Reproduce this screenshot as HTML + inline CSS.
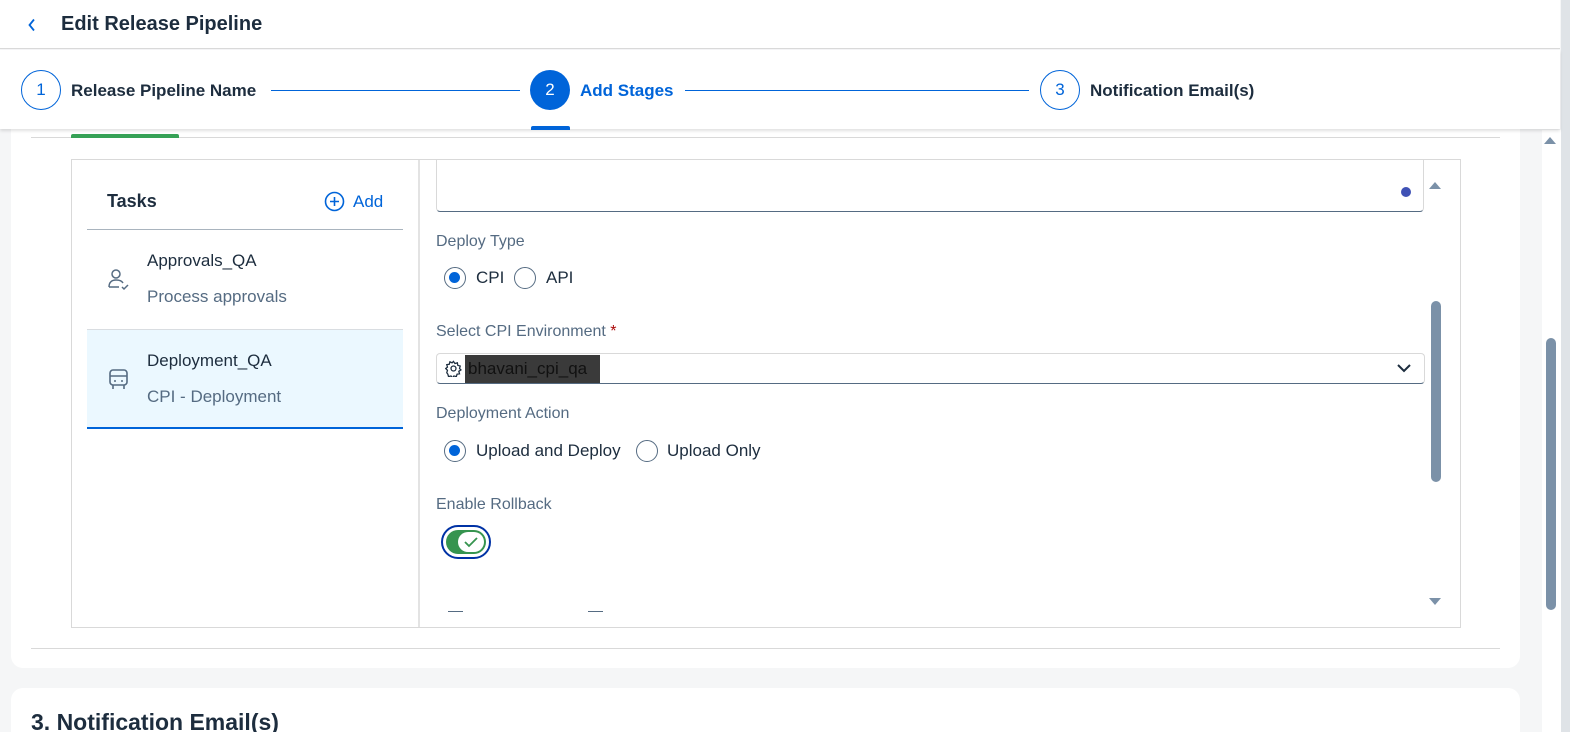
<!DOCTYPE html>
<html><head><style>
*{box-sizing:border-box;margin:0;padding:0}
html,body{width:1570px;height:732px;overflow:hidden}
body{background:#f5f6f7;font-family:"Liberation Sans",sans-serif;color:#1d2d3e;position:relative}
.abs{position:absolute}
.lbl{color:#556b82;font-size:16px}
.radio{position:absolute;width:22px;height:22px;border:1.5px solid #556b82;border-radius:50%;display:block;background:#fff}
.radio.on::after{content:"";position:absolute;left:4px;top:4px;width:11px;height:11px;border-radius:50%;background:#0064d9}
</style></head><body>
<!-- header -->
<div class="abs" style="left:0;top:0;width:1560px;height:49px;background:#fff;border-bottom:1px solid #d9d9d9"></div>
<svg class="abs" style="left:27px;top:18px" width="10" height="14"><path d="M7 1.5 L2.5 7 L7 12.5" stroke="#0064d9" stroke-width="1.8" fill="none"/></svg>
<div class="abs" style="left:61px;top:13px;font-size:20px;font-weight:bold">Edit Release Pipeline</div>
<!-- stepper -->
<div class="abs" style="left:0;top:50px;width:1560px;height:79px;background:#fff;box-shadow:0 2px 3px rgba(0,0,0,.12);z-index:2">
 <div class="abs" style="left:21px;top:20px;width:40px;height:40px;border:1.5px solid #0064d9;border-radius:50%;color:#0064d9;font-size:17px;text-align:center;line-height:37px">1</div>
 <div class="abs" style="left:71px;top:31px;font-size:17px;font-weight:bold">Release Pipeline Name</div>
 <div class="abs" style="left:271px;top:40px;width:249px;height:1px;background:#0064d9"></div>
 <div class="abs" style="left:530px;top:20px;width:40px;height:40px;background:#0064d9;border-radius:50%;color:#fff;font-size:17px;text-align:center;line-height:40px">2</div>
 <div class="abs" style="left:580px;top:31px;font-size:17px;font-weight:bold;color:#0064d9">Add Stages</div>
 <div class="abs" style="left:685px;top:40px;width:344px;height:1px;background:#0064d9"></div>
 <div class="abs" style="left:1040px;top:20px;width:40px;height:40px;border:1.5px solid #0064d9;border-radius:50%;color:#0064d9;font-size:17px;text-align:center;line-height:37px">3</div>
 <div class="abs" style="left:1090px;top:31px;font-size:17px;font-weight:bold">Notification Email(s)</div>
 <div class="abs" style="left:531px;top:76px;width:39px;height:4px;background:#0064d9;border-radius:2px 2px 0 0"></div>
</div>
<!-- card -->
<div class="abs" style="left:11px;top:110px;width:1509px;height:558px;background:#fff;border-radius:12px"></div>
<div class="abs" style="left:31px;top:137px;width:1469px;height:1px;background:#d9d9d9"></div>
<div class="abs" style="left:71px;top:134px;width:108px;height:4px;background:#36a156;border-radius:2px 2px 0 0"></div>
<div class="abs" style="left:71px;top:159px;width:1390px;height:469px;border:1px solid #d9d9d9;background:#fff"></div>
<div class="abs" style="left:418px;top:160px;width:2px;height:467px;background:#e3e3e3"></div>
<!-- left -->
<div class="abs" style="left:107px;top:191px;font-size:18px;font-weight:bold">Tasks</div>
<svg class="abs" style="left:324px;top:191px" width="21" height="21"><circle cx="10.5" cy="10.5" r="9" stroke="#0064d9" stroke-width="1.6" fill="none"/><path d="M10.5 6v9M6 10.5h9" stroke="#0064d9" stroke-width="1.6"/></svg>
<div class="abs" style="left:353px;top:192px;font-size:17px;color:#0064d9">Add</div>
<div class="abs" style="left:87px;top:229px;width:316px;height:1px;background:#a9b4be"></div>
<svg class="abs" style="left:107px;top:268px" width="24" height="24"><circle cx="9" cy="6" r="4" stroke="#556b82" stroke-width="1.5" fill="none"/><path d="M2 19c0-5 3-7 7-7s6 1 7 3M2 19h10M15 19l2 2 4-4" stroke="#556b82" stroke-width="1.5" fill="none"/></svg>
<div class="abs" style="left:147px;top:251px;font-size:17px">Approvals_QA</div>
<div class="abs" style="left:147px;top:287px;font-size:17px;color:#556b82">Process approvals</div>
<div class="abs" style="left:87px;top:329px;width:316px;height:100px;background:#ebf8ff;border-top:1px solid #d9dde1;border-bottom:2px solid #0064d9"></div>
<svg class="abs" style="left:107px;top:368px" width="24" height="24"><rect x="3" y="2" width="17" height="15" rx="3" stroke="#556b82" stroke-width="1.6" fill="none"/><path d="M3 8h17M6 17v4M17 17v4" stroke="#556b82" stroke-width="1.6"/><circle cx="8" cy="13" r="1" fill="#556b82"/><circle cx="15" cy="13" r="1" fill="#556b82"/></svg>
<div class="abs" style="left:147px;top:351px;font-size:17px">Deployment_QA</div>
<div class="abs" style="left:147px;top:387px;font-size:17px;color:#556b82">CPI - Deployment</div>
<!-- right -->
<div class="abs" style="left:436px;top:160px;width:988px;height:52px;border:1px solid #d9d9d9;border-top:none;border-bottom:1.5px solid #556b82;border-radius:0 0 4px 4px"></div>
<div class="abs" style="left:1401px;top:187px;width:10px;height:10px;border-radius:50%;background:#3f51b5"></div>
<div class="abs lbl" style="left:436px;top:233px">Deploy Type</div>
<span class="radio on" style="left:444px;top:267px"></span>
<div class="abs" style="left:476px;top:268px;font-size:17px">CPI</div>
<span class="radio" style="left:514px;top:267px"></span>
<div class="abs" style="left:546px;top:268px;font-size:17px">API</div>
<div class="abs lbl" style="left:436px;top:323px">Select CPI Environment<span style="color:#aa0808"> *</span></div>
<div class="abs" style="left:436px;top:353px;width:989px;height:31px;border:1px solid #d9d9d9;border-bottom:1.5px solid #556b82;border-radius:4px"></div>
<svg class="abs" style="left:445px;top:360px" width="17" height="17" viewBox="0 0 24 24"><path d="M12 2l2 3 3.5-1 .5 3.5 3.5 1-1 3.5 2 2-3 2 1 3.5-3.5.5-1 3.5-3.5-1-2 3-2-3-3.5 1-1-3.5L2.5 18l1-3.5L1 12l2.5-2-1-3.5L6 6l1-3.5L10 4z" stroke="#1d2d3e" stroke-width="1.8" fill="none"/><circle cx="12" cy="12" r="3.5" stroke="#1d2d3e" stroke-width="1.8" fill="none"/></svg>
<div class="abs" style="left:465px;top:355px;width:135px;height:28px;background:#3a3a3a"></div>
<div class="abs" style="left:468px;top:359px;font-size:17px;color:#111">bhavani_cpi_qa</div>
<svg class="abs" style="left:1397px;top:363px" width="14" height="10"><path d="M1 2l6 6 6-6" stroke="#1d2d3e" stroke-width="2" fill="none"/></svg>
<div class="abs lbl" style="left:436px;top:405px">Deployment Action</div>
<span class="radio on" style="left:444px;top:440px"></span>
<div class="abs" style="left:476px;top:441px;font-size:17px">Upload and Deploy</div>
<span class="radio" style="left:636px;top:440px"></span>
<div class="abs" style="left:667px;top:441px;font-size:17px">Upload Only</div>
<div class="abs lbl" style="left:436px;top:496px">Enable Rollback</div>
<div class="abs" style="left:441px;top:525px;width:50px;height:34px;border:2px solid #0032a5;border-radius:17px;background:#fff"></div>
<div class="abs" style="left:446px;top:530px;width:40px;height:24px;border-radius:12px;background:#36944f"></div>
<div class="abs" style="left:458px;top:532px;width:26px;height:20px;border-radius:10px;background:#fff"></div>
<svg class="abs" style="left:463px;top:535px" width="16" height="14"><path d="M2 7l4 4 8-8" stroke="#36944f" stroke-width="1.8" fill="none"/></svg>
<div class="abs" style="left:448px;top:611px;width:15px;height:1px;background:#556b82"></div>
<div class="abs" style="left:588px;top:611px;width:15px;height:1px;background:#556b82"></div>
<!-- inner scrollbar -->
<svg class="abs" style="left:1428px;top:180px" width="14" height="10"><path d="M1 9L7 2l6 7z" fill="#7b91a8"/></svg>
<div class="abs" style="left:1431px;top:301px;width:10px;height:181px;border-radius:5px;background:#7b91a8"></div>
<svg class="abs" style="left:1428px;top:597px" width="14" height="10"><path d="M1 1l6 7 6-7z" fill="#7b91a8"/></svg>
<div class="abs" style="left:31px;top:648px;width:1469px;height:1px;background:#d9d9d9"></div>
<!-- second card -->
<div class="abs" style="left:11px;top:688px;width:1509px;height:44px;background:#fff;border-radius:12px 12px 0 0"></div>
<div class="abs" style="left:31px;top:709px;font-size:23px;font-weight:bold">3. Notification Email(s)</div>
<!-- main scrollbar -->
<div class="abs" style="left:1542px;top:130px;width:19px;height:602px;background:#fff"></div>
<div class="abs" style="left:1561px;top:0;width:9px;height:732px;background:#dfe3e7"></div>
<svg class="abs" style="left:1543px;top:135px" width="14" height="10"><path d="M1 9L7 2l6 7z" fill="#7b91a8"/></svg>
<div class="abs" style="left:1546px;top:338px;width:10px;height:272px;border-radius:5px;background:#7b91a8"></div>
</body></html>
